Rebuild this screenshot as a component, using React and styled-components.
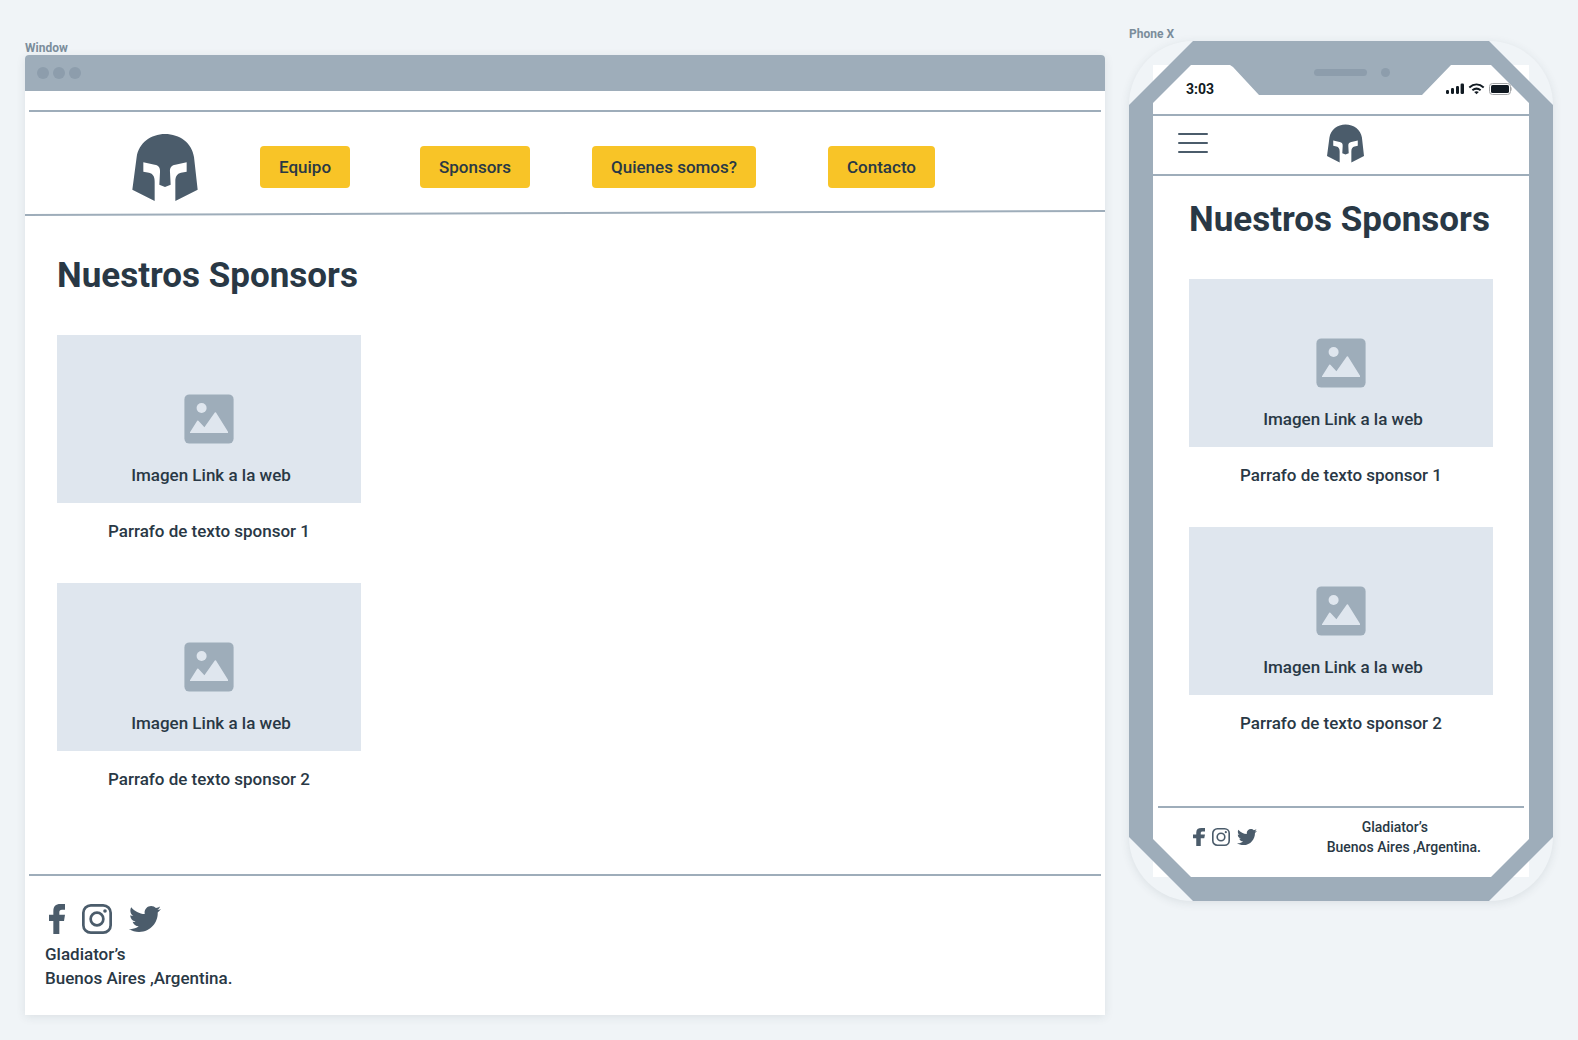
import React from "react";
import styled, { createGlobalStyle } from "styled-components";
import { FaTwitter } from "react-icons/fa";

const color = {
  canvas: "#f0f4f7",
  frame: "#9eadba",
  detail: "#8d9dac",
  ink: "#293845",
  icon: "#4b5c6b",
  block: "#dfe6ee",
  accent: "#f8c427",
  label: "#7b8d9b",
};

const GlobalStyle = createGlobalStyle`
  *, *::before, *::after { box-sizing: border-box; }
  body {
    margin: 0;
    background: ${color.canvas};
    color: ${color.ink};
    font-family: Roboto, "Liberation Sans", sans-serif;
    font-size: 17px;
    line-height: 24px;
    font-weight: 500;
  }
  h1, h2, p { margin: 0; }
  a { color: inherit; text-decoration: none; }
  svg { display: block; }
`;

const Canvas = styled.div`
  display: flex;
  align-items: flex-start;
  gap: 24px;
  padding: 27px 25px 25px;
`;

const Artboard = styled.section`
  flex: ${(p) => (p.$grow ? "1 1 0" : "0 0 424px")};
  min-width: 0;
  padding-top: ${(p) => (p.$grow ? 14 : 0)}px;
`;

const Label = styled.h2`
  font-size: 12px;
  line-height: 14px;
  font-weight: 700;
  color: ${color.label};
`;

const Browser = styled.div`
  background: #fff;
  border-radius: 4px 4px 0 0;
  overflow: hidden;
  box-shadow: 0 2px 10px rgba(41, 56, 69, 0.1);
`;

const TitleBar = styled.div`
  display: flex;
  align-items: center;
  gap: 4px;
  height: 36px;
  padding: 0 12px;
  background: ${color.frame};
`;

const Dot = styled.span`
  width: 12px;
  height: 12px;
  border-radius: 50%;
  background: ${color.detail};
`;

const Rule = styled.hr`
  height: 2px;
  margin: ${(p) => p.$top || 0}px ${(p) => p.$inset || 0}px 0;
  border: 0;
  background: ${color.frame};
`;

const SlantedRule = styled.svg`
  width: 100%;
  height: 6px;
  stroke: ${color.frame};
  stroke-width: 2;
`;

const SiteHeader = styled.header`
  display: flex;
  align-items: center;
  gap: 62px;
  height: 98px;
  padding: 12px 0 0 107px;
`;

const Nav = styled.nav`
  display: grid;
  grid-template-columns: 160px 172px 236px auto;
  justify-items: start;
`;

const NavButton = styled.button`
  height: 42px;
  padding: 0 19px;
  border: 0;
  border-radius: 4px;
  background: ${color.accent};
  color: inherit;
  font: inherit;
  white-space: nowrap;
`;

const Main = styled.main`
  padding: ${(p) => (p.$phone ? "22px 36px 0" : "38px 32px 0")};
`;

const Heading = styled.h1`
  margin-bottom: 37px;
  font-size: 35px;
  line-height: 44px;
  font-weight: 700;
  white-space: nowrap;
`;

const SponsorList = styled.div`
  display: flex;
  flex-direction: column;
  gap: 40px;
  width: 304px;
`;

const Sponsor = styled.article`
  display: flex;
  flex-direction: column;
  gap: 16px;
  text-align: center;
`;

const ImageLink = styled.a`
  display: flex;
  flex-direction: column;
  align-items: center;
  justify-content: flex-end;
  gap: 19px;
  height: 168px;
  padding-bottom: 16px;
  background: ${color.block};
`;

const Caption = styled.span`
  padding-left: 4px;
`;

const SiteFooter = styled.footer`
  display: flex;
  flex-direction: column;
  gap: 7px;
  padding: 27px 20px 25px;
`;

const Social = styled.div`
  display: flex;
  align-items: center;
  gap: ${(p) => p.$gap}px;
  padding-left: 4px;
  color: ${color.icon};
`;

const Address = styled.p`
  font-size: ${(p) => (p.$small ? 14 : 17)}px;
  line-height: ${(p) => (p.$small ? 20 : 24)}px;
  text-align: ${(p) => (p.$small ? "center" : "left")};
`;

const TeamName = styled.span`
  display: block;
  padding-right: 18px;
`;

const Phone = styled.div`
  position: relative;
  padding: 24px;
  border-radius: 64px;
  box-shadow: 0 2px 10px rgba(41, 56, 69, 0.1);
`;

/* Octagonal bezel: the outer outline, then the screen cut-out with its notch. */
const Bezel = styled.div`
  position: absolute;
  inset: 0;
  pointer-events: none;
  background: ${color.frame};
  clip-path: polygon(
    evenodd,
    64px 0, calc(100% - 64px) 0, 100% 64px, 100% calc(100% - 64px),
    calc(100% - 64px) 100%, 64px 100%, 0 calc(100% - 64px), 0 64px, 64px 0,
    62px 24px, 101px 24px, 104px 26px, 130px 54px, 293px 54px, 322px 24px,
    calc(100% - 62px) 24px, calc(100% - 24px) 62px,
    calc(100% - 24px) calc(100% - 62px), calc(100% - 62px) calc(100% - 24px),
    62px calc(100% - 24px), 24px calc(100% - 62px), 24px 62px, 62px 24px, 64px 0
  );
`;

const Speaker = styled.span`
  position: absolute;
  top: 28px;
  left: 185px;
  width: 53px;
  height: 7px;
  border-radius: 4px;
  background: ${color.detail};
`;

const Camera = styled.span`
  position: absolute;
  top: 27px;
  left: 252px;
  width: 9px;
  height: 9px;
  border-radius: 50%;
  background: ${color.detail};
`;

const Screen = styled.div`
  background: #fff;
`;

const StatusBar = styled.div`
  display: flex;
  align-items: center;
  justify-content: space-between;
  height: 49px;
  padding: 0 17px 2px 33px;
  font-size: 14px;
  font-weight: 700;
  color: #111a22;
`;

const StatusIcons = styled.svg`
  width: 66px;
  height: 12px;
`;

const PhoneHeader = styled.header`
  display: grid;
  grid-template-columns: 1fr auto 1fr;
  align-items: center;
  height: 58px;
  padding: 0 16px 4px 25px;
`;

const MenuButton = styled.button`
  display: flex;
  flex-direction: column;
  gap: 7px;
  width: 30px;
  padding: 0;
  border: 0;
  background: none;
`;

const MenuLine = styled.span`
  width: 100%;
  height: 2px;
  border-radius: 1px;
  background: ${color.icon};
`;

const PhoneFooter = styled.footer`
  display: flex;
  align-items: flex-start;
  justify-content: space-between;
  padding: 9px 48px 20px 36px;
`;

const SocialSlot = styled.div`
  padding-top: 10px;
`;

function Helmet({ width, height }) {
  return (
    <svg width={width} height={height} viewBox="37 39 196 201" fill={color.icon} role="img" aria-label="Gladiator's">
      <path d="M135 39C93 39 56 66 50 108L37 206L104 240V182C104 166 99 158 87 155L70 152V124L104 131C116 133 121 140 120 153L118 191L135 198L152 191L150 153C149 140 154 133 166 131L200 124V152L183 155C171 158 166 166 166 182V240L233 206L222 108C216 66 179 39 135 39Z" />
    </svg>
  );
}

function Facebook({ width, height }) {
  return (
    <svg width={width} height={height} viewBox="0 0 48 90" preserveAspectRatio="none" fill="currentColor">
      <path d="M13 90V51H0V32H13V22C13 7 20 0 34 0H48V17H39C33 17 31 20 31 25V32H48L45 51H31V90Z" />
    </svg>
  );
}

function Instagram({ size }) {
  return (
    <svg width={size} height={size} viewBox="0 0 30 30" fill="none" stroke="currentColor">
      <rect x="1.35" y="1.35" width="27.3" height="27.3" rx="7.5" strokeWidth="2.7" />
      <circle cx="15" cy="15" r="6.35" strokeWidth="2.7" />
      <circle cx="23" cy="7" r="1.8" fill="currentColor" stroke="none" />
    </svg>
  );
}

function Picture() {
  return (
    <svg width="50" height="50" viewBox="0 0 50 50">
      <rect x="0.4" y="0.4" width="49.2" height="49.2" rx="5" fill={color.frame} />
      <g fill={color.block}>
        <circle cx="17.6" cy="14" r="5" />
        <path d="M6 38.3L13.2 26.8Q13.8 26 14.4 26.8L20.4 33.2L30.8 18.6Q31.4 17.8 32 18.6L44 37.8V39H6Z" />
      </g>
    </svg>
  );
}

function SocialLinks({ small }) {
  return (
    <Social $gap={small ? 7 : 17}>
      <a href="#facebook" aria-label="Facebook">
        <Facebook width={small ? 12 : 16} height={small ? 18 : 30} />
      </a>
      <a href="#instagram" aria-label="Instagram">
        <Instagram size={small ? 18 : 30} />
      </a>
      <a href="#twitter" aria-label="Twitter">
        <FaTwitter size={small ? 20 : 32} />
      </a>
    </Social>
  );
}

function Sponsors() {
  return (
    <>
      <Heading>Nuestros Sponsors</Heading>
      <SponsorList>
        {[1, 2].map((n) => (
          <Sponsor key={n}>
            <ImageLink href="#sponsor">
              <Picture />
              <Caption>Imagen Link a la web</Caption>
            </ImageLink>
            <p>Parrafo de texto sponsor {n}</p>
          </Sponsor>
        ))}
      </SponsorList>
    </>
  );
}

export default function App() {
  return (
    <>
      <GlobalStyle />
      <Canvas>
        <Artboard $grow>
          <Label>Window</Label>
          <Browser>
            <TitleBar>
              <Dot />
              <Dot />
              <Dot />
            </TitleBar>
            <Rule $top={19} $inset={4} />
            <SiteHeader>
              <Helmet width={66} height={67} />
              <Nav>
                <NavButton>Equipo</NavButton>
                <NavButton>Sponsors</NavButton>
                <NavButton>Quienes somos?</NavButton>
                <NavButton>Contacto</NavButton>
              </Nav>
            </SiteHeader>
            <SlantedRule>
              <line x1="0" y1="5" x2="100%" y2="1" />
            </SlantedRule>
            <Main>
              <Sponsors />
            </Main>
            <Rule $top={83} $inset={4} />
            <SiteFooter>
              <SocialLinks />
              <Address>
                Gladiator’s
                <br />
                Buenos Aires ,Argentina.
              </Address>
            </SiteFooter>
          </Browser>
        </Artboard>

        <Artboard>
          <Label>Phone X</Label>
          <Phone>
            <Screen>
              <StatusBar>
                <span>3:03</span>
                <StatusIcons viewBox="0 0 66 12" fill="currentColor">
                  <rect x="0" y="7" width="3" height="4" rx="1.2" />
                  <rect x="5" y="5" width="3" height="6" rx="1.2" />
                  <rect x="10" y="3" width="3" height="8" rx="1.2" />
                  <rect x="14.6" y="0.6" width="3.4" height="10.4" rx="1.2" />
                  <g fill="none" stroke="currentColor" strokeWidth="2">
                    <path d="M23.3 4.4C27.7 0.6 33.3 0.6 37.7 4.4" />
                    <path d="M26.4 7.3C29 5.2 32 5.2 34.6 7.3" />
                  </g>
                  <path d="M28.2 9Q30.5 7.4 32.8 9L30.5 11.2Z" />
                  <rect x="43.5" y="0.5" width="21" height="11" rx="3" fill="none" stroke="#a3a5a7" />
                  <rect x="45" y="2" width="18" height="8" rx="1.6" />
                  <path d="M65.4 4Q67 6 65.4 8Z" fill="#a3a5a7" />
                </StatusIcons>
              </StatusBar>
              <Rule />
              <PhoneHeader>
                <MenuButton aria-label="Menu">
                  <MenuLine />
                  <MenuLine />
                  <MenuLine />
                </MenuButton>
                <Helmet width={37} height={39} />
              </PhoneHeader>
              <Rule />
              <Main $phone>
                <Sponsors />
              </Main>
              <Rule $top={71} $inset={5} />
              <PhoneFooter>
                <SocialSlot>
                  <SocialLinks small />
                </SocialSlot>
                <Address $small>
                  <TeamName>Gladiator’s</TeamName>
                  Buenos Aires ,Argentina.
                </Address>
              </PhoneFooter>
            </Screen>
            <Bezel />
            <Speaker />
            <Camera />
          </Phone>
        </Artboard>
      </Canvas>
    </>
  );
}
